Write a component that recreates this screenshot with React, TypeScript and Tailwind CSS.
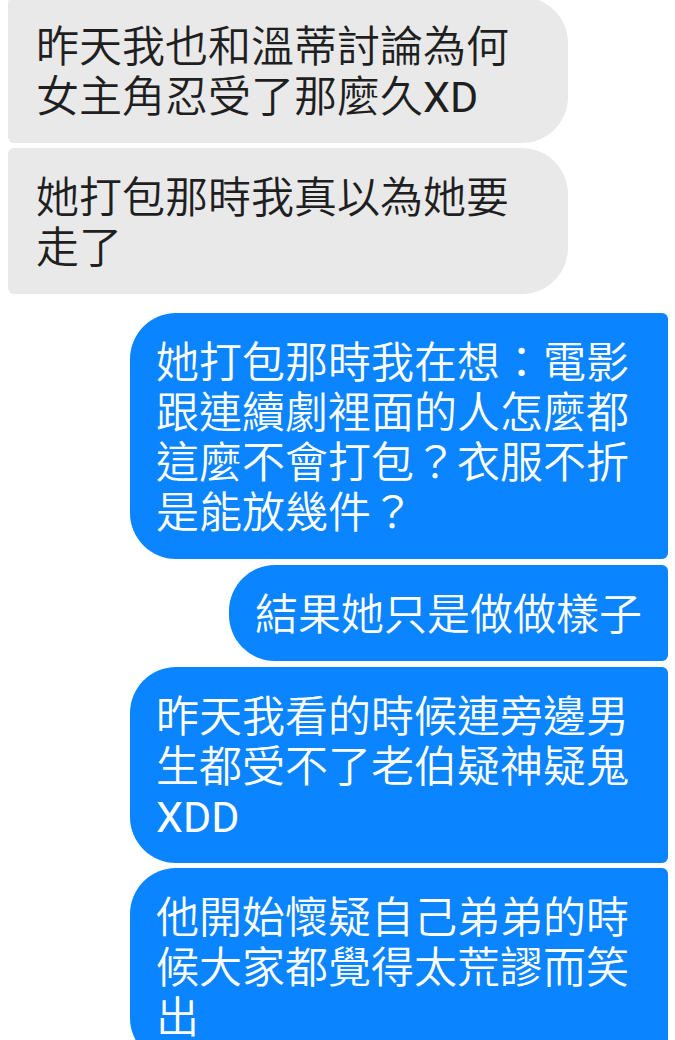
import React from 'react';

interface BubbleProps {
  children: React.ReactNode;
  mine?: boolean;
  className?: string;
}

const Bubble: React.FC<BubbleProps> = ({ children, mine = false, className = '' }) => {
  return (
    <div
      className={`
        pt-[25px] pb-[21px] text-[43px] leading-[50px] font-[350] break-all
        ${mine
          ? 'self-end mr-[7px] max-w-[538px] px-[26px] bg-[#0b84ff] text-white rounded-l-[46px] rounded-r-[6px]'
          : 'ml-[8px] w-[560px] pl-[28px] pr-[30px] bg-[#e9e9e9] text-[#1f1f1f] rounded-r-[46px] rounded-l-[6px]'
        }
        ${className}
      `}
    >
      {children}
    </div>
  );
};

const Latin: React.FC<{ children: React.ReactNode }> = ({ children }) => (
  <span className="font-normal">{children}</span>
);

const App: React.FC = () => {
  return (
    <div
      className="w-[675px] h-[1040px] overflow-hidden bg-white flex flex-col"
      style={{ fontFamily: "Roboto, 'Noto Sans CJK TC', sans-serif" }}
    >
      <Bubble className="-mt-[3px]">
        昨天我也和溫蒂討論為何女主角忍受了那麼久<Latin>XD</Latin>
      </Bubble>
      <Bubble className="mt-[5px]">她打包那時我真以為她要走了</Bubble>

      <Bubble mine className="mt-[19px]">
        她打包那時我在想：電影跟連續劇裡面的人怎麼都這麼不會打包？衣服不折是能放幾件？
      </Bubble>
      <Bubble mine className="mt-[6px]">結果她只是做做樣子</Bubble>
      <Bubble mine className="mt-[6px]">
        昨天我看的時候連旁邊男生都受不了老伯疑神疑鬼<Latin>XDD</Latin>
      </Bubble>
      <Bubble mine className="mt-[5px] shrink-0">
        他開始懷疑自己弟弟的時候大家都覺得太荒謬而笑出
      </Bubble>
    </div>
  );
};

export default App;
